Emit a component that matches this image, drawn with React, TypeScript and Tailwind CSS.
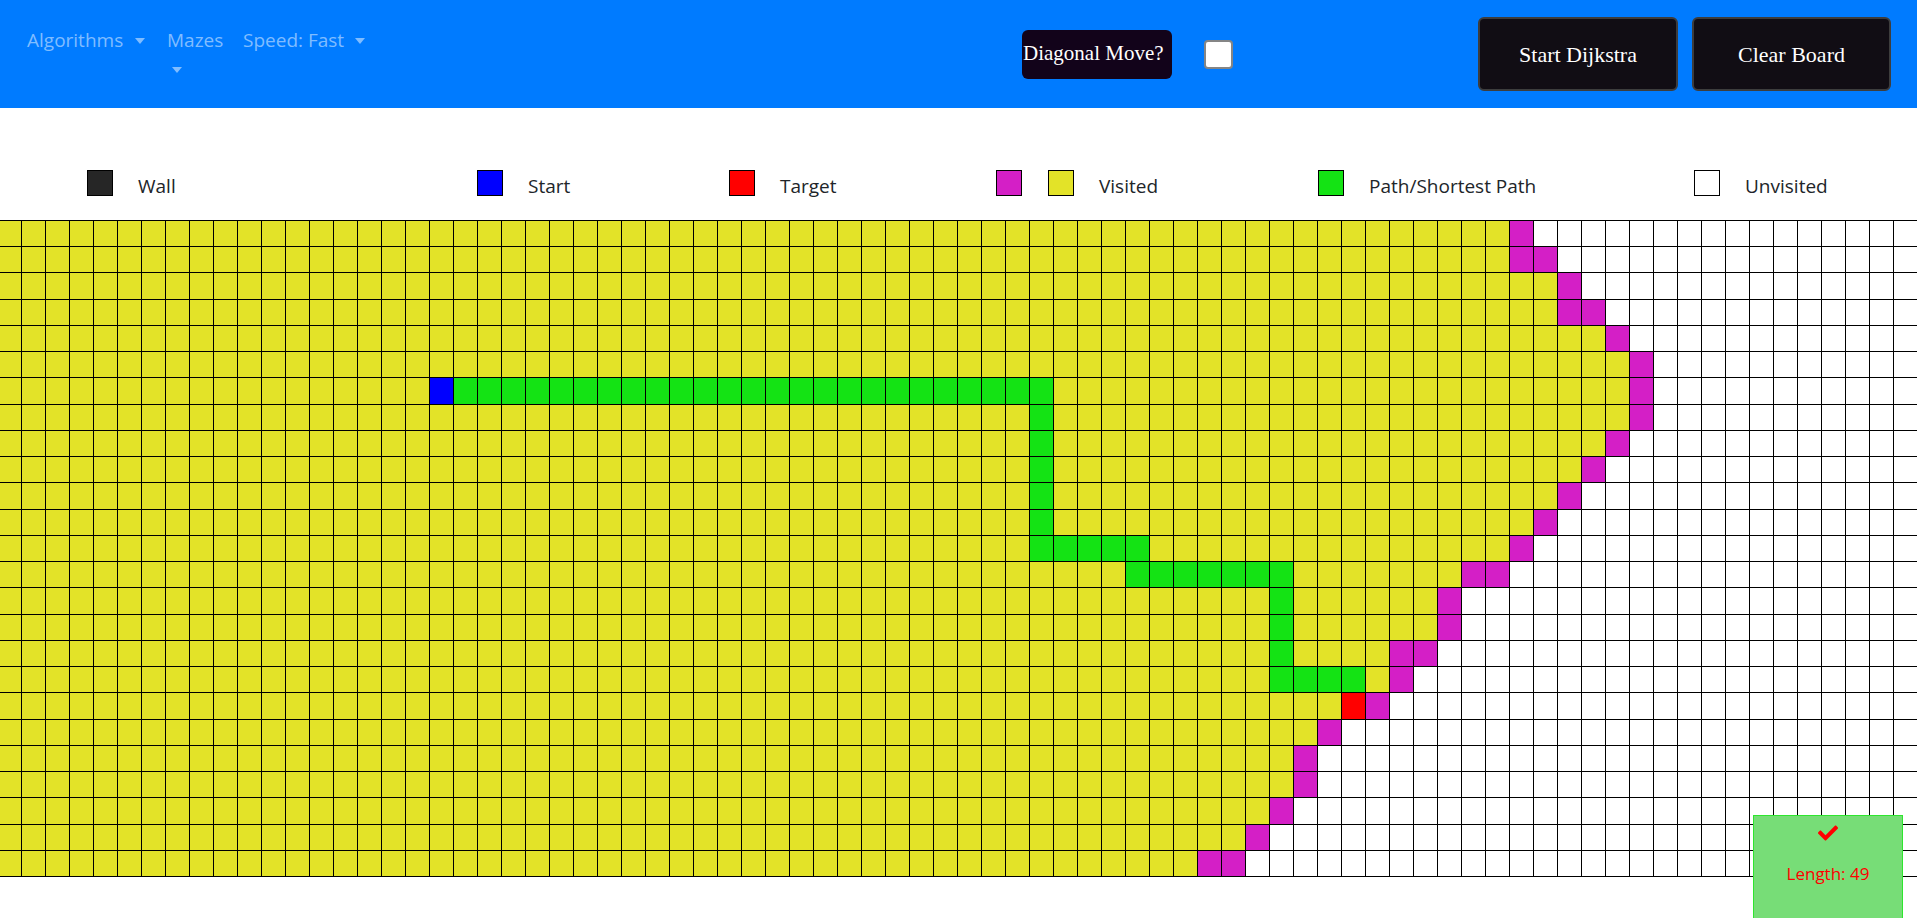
import React from 'react';
import { FaCheck } from 'react-icons/fa';

const COLS = 80;
const ROWS = 25;
const START = { col: 18, row: 6 };
const TARGET = { col: 56, row: 18 };
const REACH = 50;

// cells still in the queue when the search stopped, by row
const FRONTIER: number[][] = [
  [63], [63, 64], [65], [65, 66], [67], [68], [68], [68], [67], [66],
  [65], [64], [63], [61, 62], [60], [60], [58, 59], [58], [57], [55],
  [54], [54], [53], [52], [50, 51],
];

type Kind = 'start' | 'target' | 'path' | 'frontier' | 'visited' | 'empty';

const cellColor: Record<Kind, string> = {
  start: 'bg-[#0000ff]',
  target: 'bg-[#ff0000]',
  path: 'bg-[#14e314]',
  frontier: 'bg-[#d41fc6]',
  visited: 'bg-[#e3e328]',
  empty: 'bg-white',
};

const buildPath = () => {
  const cells = new Set<string>();
  const add = (c: number, r: number) => cells.add(`${c},${r}`);
  for (let c = 19; c <= 43; c++) add(c, 6);
  for (let r = 7; r <= 11; r++) add(43, r);
  for (let c = 43; c <= 47; c++) add(c, 12);
  for (let c = 47; c <= 53; c++) add(c, 13);
  for (let r = 14; r <= 16; r++) add(53, r);
  for (let c = 53; c <= 56; c++) add(c, 17);
  return cells;
};

const PATH = buildPath();

const kindOf = (col: number, row: number): Kind => {
  if (col === START.col && row === START.row) return 'start';
  if (col === TARGET.col && row === TARGET.row) return 'target';
  if (PATH.has(`${col},${row}`)) return 'path';
  if (FRONTIER[row].includes(col)) return 'frontier';
  const dist = Math.abs(col - START.col) + Math.abs(row - START.row);
  return dist <= REACH ? 'visited' : 'empty';
};

const Caret: React.FC<{ className?: string }> = ({ className = '' }) => (
  <span
    className={`inline-block h-0 w-0 border-x-[5.5px] border-t-[6px] border-x-transparent border-t-current ${className}`}
  />
);

const Swatch: React.FC<{ color: string }> = ({ color }) => (
  <span className={`block h-[26px] w-[26px] border border-black ${color}`} />
);

const LegendItem: React.FC<{ width: string; swatches: string[]; label: string }> = ({
  width,
  swatches,
  label,
}) => (
  <div className={`flex h-[26px] items-center ${width}`}>
    <div className="flex gap-[26px]">
      {swatches.map((s, i) => (
        <Swatch key={i} color={s} />
      ))}
    </div>
    <span className="ml-[25px] pt-[5px] text-[19px] leading-[26px] text-[#212529]">{label}</span>
  </div>
);

const App: React.FC = () => {
  const cells = [];
  for (let r = 0; r < ROWS; r++) {
    for (let c = 0; c < COLS; c++) {
      cells.push(<div key={`${r}-${c}`} className={cellColor[kindOf(c, r)]} />);
    }
  }

  return (
    <div className="relative min-h-screen bg-white font-['Open_Sans',sans-serif]">
      <header className="flex h-[108px] bg-[#007bff]">
        <nav className="flex w-[1022px] items-start pl-[27px] pt-[26px] text-[19px] leading-[29px] text-[#80bdff]">
          <div className="flex w-[140px] items-center">
            Algorithms
            <Caret className="ml-[12px]" />
          </div>
          <div className="flex w-[76px] flex-col">
            Mazes
            <div className="flex h-[29px] items-center">
              <Caret className="ml-[5px]" />
            </div>
          </div>
          <div className="flex items-center">
            Speed: Fast
            <Caret className="ml-[11px]" />
          </div>
        </nav>

        <button className="h-[49px] w-[150px] self-center whitespace-nowrap rounded-[6px] bg-[#12031a] pl-px text-left font-['Liberation_Serif',serif] text-[21px] text-white">
          Diagonal Move?
        </button>
        <input
          type="checkbox"
          className="ml-[32px] h-[29px] w-[29px] appearance-none self-center rounded-[4px] border-2 border-[#858585] bg-white"
        />

        <div className="ml-auto mr-[26px] flex gap-[14px] self-center font-['Liberation_Serif',serif] text-[22px] text-white">
          <button className="h-[74px] w-[200px] rounded-[6px] border-2 border-[#3d3d3d] bg-[#110d14]">
            Start Dijkstra
          </button>
          <button className="h-[74px] w-[199px] rounded-[6px] border-2 border-[#3d3d3d] bg-[#110d14]">
            Clear Board
          </button>
        </div>
      </header>

      <div className="flex h-[112px] items-start pl-[87px] pt-[62px]">
        <LegendItem width="w-[390px]" swatches={['bg-[#262626]']} label="Wall" />
        <LegendItem width="w-[252px]" swatches={['bg-[#0000ff]']} label="Start" />
        <LegendItem width="w-[267px]" swatches={['bg-[#ff0000]']} label="Target" />
        <LegendItem width="w-[322px]" swatches={['bg-[#d41fc6]', 'bg-[#e3e328]']} label="Visited" />
        <LegendItem width="w-[376px]" swatches={['bg-[#14e314]']} label="Path/Shortest Path" />
        <LegendItem width="w-[200px]" swatches={['bg-white']} label="Unvisited" />
      </div>

      <div className="w-full overflow-hidden">
        <div className="ml-[-3px] grid h-[657px] w-max grid-cols-[repeat(80,23px)] grid-rows-[repeat(25,minmax(0,1fr))] gap-px border border-black bg-black">
          {cells}
        </div>
      </div>

      <div className="fixed bottom-0 left-[1753px] flex h-[103px] w-[150px] flex-col items-center border border-b-0 border-[#2ee62e] bg-[#77dd77] text-[#ff0000]">
        <FaCheck size={20} className="mt-[7px] block" />
        <div className="mt-[19px] text-[17px] leading-[24px]">Length: 49</div>
      </div>
    </div>
  );
};

export default App;
